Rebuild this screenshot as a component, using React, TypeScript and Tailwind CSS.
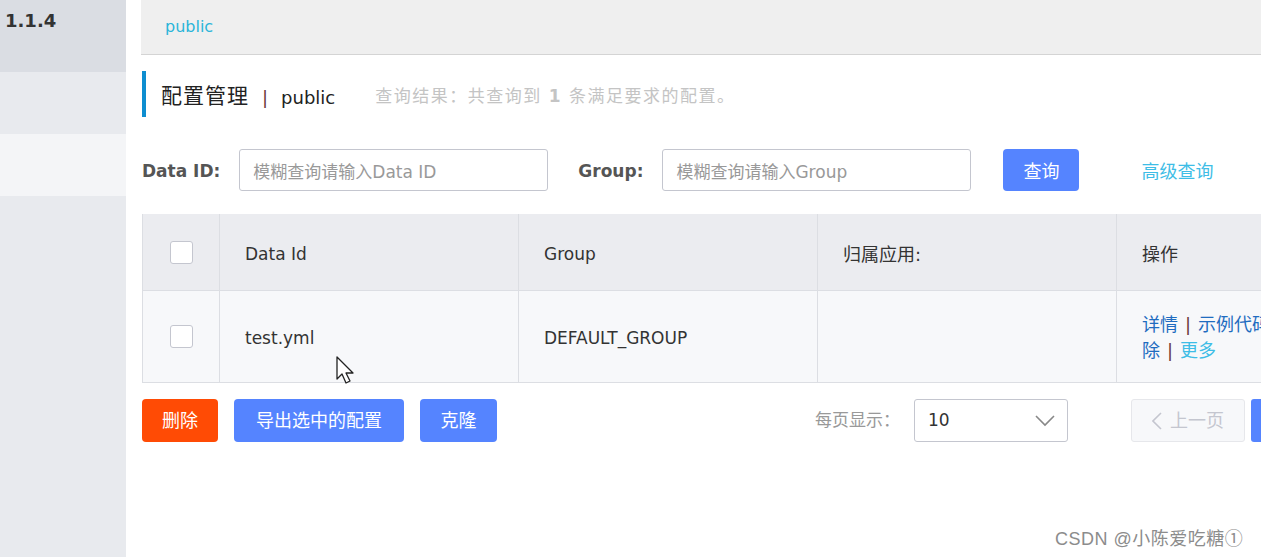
const font = { fontFamily: '"DejaVu Sans", "Noto Sans CJK SC", sans-serif' }

function Checkbox() {
  return <span className="block w-[23px] h-[23px] rounded-[3px] border border-[#c4c6cf] bg-white" />
}

export default function App() {
  return (
    <div className="relative flex h-[557px] w-[1261px] overflow-hidden bg-white text-[#333]" style={font}>
      {/* sidebar */}
      <div className="w-[126px] shrink-0 flex flex-col">
        <div className="h-[72px] bg-[#dadde3] pl-[5px] pt-[7px] text-[18px] font-bold text-[#333]">1.1.4</div>
        <div className="h-[62px] bg-[#e8eaee]" />
        <div className="h-[62px] bg-[#f4f5f7]" />
        <div className="flex-1 bg-[#e8eaee]" />
      </div>

      {/* main */}
      <div className="flex-1 min-w-0 pl-[15px] overflow-hidden">
        <div className="h-[55px] bg-[#efefef] border-b border-[#d4d4d4] flex items-center pl-[24px] text-[16px] text-[#2ab5d9]">
          public
        </div>

        <div className="ml-px mt-[16px] h-[46px] border-l-[4px] border-[#0e8ed0] flex items-center pl-[15px] pt-[6px] whitespace-nowrap">
          <span className="text-[21px] tracking-[1px] text-[#222]">配置管理</span>
          <span className="mx-[13px] text-[18px] text-[#6b3a3a]">|</span>
          <span className="text-[18px] text-[#222]">public</span>
          <span className="ml-[40px] text-[17px] tracking-[1.5px] text-[#c4c4c4]">
            查询结果：共查询到 <b className="font-bold">1</b> 条满足要求的配置。
          </span>
        </div>

        <div className="ml-px mt-[32px] h-[42px] flex items-center whitespace-nowrap">
          <span className="pt-[3px] text-[17px] font-bold text-[#555]">Data ID:</span>
          <input
            className="ml-[19px] w-[309px] h-[42px] shrink-0 rounded-[3px] border border-[#c4c6cf] px-[13px] pt-[3px] text-[17px] outline-none placeholder:text-[#999]"
            placeholder="模糊查询请输入Data ID"
          />
          <span className="ml-[30px] pt-[3px] text-[17px] font-bold text-[#555]">Group:</span>
          <input
            className="ml-[19px] w-[309px] h-[42px] shrink-0 rounded-[3px] border border-[#c4c6cf] px-[13px] pt-[3px] text-[17px] outline-none placeholder:text-[#999]"
            placeholder="模糊查询请输入Group"
          />
          <button className="ml-[32px] w-[76px] h-[42px] shrink-0 rounded-[4px] bg-[#5584ff] pt-[3px] text-white text-[18px]">查询</button>
          <a className="ml-[62px] pt-[3px] text-[18px] text-[#3ebde6]">高级查询</a>
        </div>

        {/* table */}
        <div className="ml-px mt-[23px] w-[1300px] border-l border-b border-[#dcdee3] text-[17px]">
          <div className="grid grid-cols-[77px_299px_299px_299px_326px] h-[77px] bg-[#ebecf0] border-b border-[#dcdee3]">
            <div className="flex items-center justify-center border-r border-[#dcdee3]"><Checkbox /></div>
            <div className="flex items-center pl-[25px] pt-[5px] border-r border-[#dcdee3]">Data Id</div>
            <div className="flex items-center pl-[25px] pt-[5px] border-r border-[#dcdee3]">Group</div>
            <div className="flex items-center pl-[25px] pt-[5px] border-r border-[#dcdee3] text-[18px]">归属应用:</div>
            <div className="flex items-center pl-[25px] pt-[5px] text-[18px]">操作</div>
          </div>
          <div className="grid grid-cols-[77px_299px_299px_299px_326px] h-[91px] bg-[#f7f8fa]">
            <div className="flex items-center justify-center border-r border-[#dcdee3]"><Checkbox /></div>
            <div className="flex items-center pl-[25px] pt-[4px] border-r border-[#dcdee3]">test.yml</div>
            <div className="flex items-center pl-[25px] pt-[4px] border-r border-[#dcdee3]">DEFAULT_GROUP</div>
            <div className="border-r border-[#dcdee3]" />
            <div className="flex flex-col justify-center pl-[25px] pt-[2px] text-[18px] leading-[26px] whitespace-nowrap">
              <div>
                <a className="text-[#1f6cc0]">详情</a>
                <span className="mx-[7px] text-[#6b3a3a]">|</span>
                <a className="text-[#1f6cc0]">示例代码</a>
                <span className="mx-[7px] text-[#6b3a3a]">|</span>
                <a className="text-[#1f6cc0]">编辑</a>
                <span className="mx-[7px] text-[#6b3a3a]">|</span>
                <a className="text-[#1f6cc0]">删</a>
              </div>
              <div>
                <a className="text-[#1f6cc0]">除</a>
                <span className="mx-[7px] text-[#6b3a3a]">|</span>
                <a className="text-[#3ebde6]">更多</a>
              </div>
            </div>
          </div>
        </div>

        {/* footer */}
        <div className="ml-px mt-[16px] h-[43px] flex items-center whitespace-nowrap">
          <button className="w-[76px] h-[43px] shrink-0 rounded-[4px] bg-[#ff4b05] text-white text-[18px]">删除</button>
          <button className="ml-[16px] w-[170px] h-[43px] shrink-0 rounded-[4px] bg-[#5584ff] text-white text-[18px]">导出选中的配置</button>
          <button className="ml-[16px] w-[77px] h-[43px] shrink-0 rounded-[4px] bg-[#5584ff] text-white text-[18px]">克隆</button>
          <span className="ml-[318px] text-[17px] text-[#999]">每页显示：</span>
          <div className="ml-[14px] w-[154px] h-[43px] shrink-0 rounded-[3px] border border-[#c4c6cf] flex items-center justify-between pl-[13px] pr-[12px] text-[17px] text-[#333]">
            <span>10</span>
            <svg width="20" height="12" viewBox="0 0 20 12" fill="none" stroke="#888" strokeWidth="1.6">
              <path d="M1 1l9 9 9-9" />
            </svg>
          </div>
          <div className="ml-[63px] w-[114px] h-[43px] shrink-0 rounded-[3px] border border-[#e6e7eb] bg-[#f7f8fa] flex items-center justify-center gap-[8px] text-[18px] text-[#c4c6cf]">
            <svg width="10" height="18" viewBox="0 0 10 18" fill="none" stroke="#c4c6cf" strokeWidth="1.6">
              <path d="M9 1L1 9l8 8" />
            </svg>
            <span>上一页</span>
          </div>
          <div className="ml-[6px] w-[60px] h-[43px] shrink-0 rounded-[3px] bg-[#5584ff]" />
        </div>
      </div>

      {/* mouse cursor */}
      <svg className="absolute left-[336px] top-[356px]" width="22" height="30" viewBox="0 0 22 30">
        <path d="M1 1v22l5-5 4 9 4-2-4-8h7z" fill="white" stroke="#222" strokeWidth="1.3" strokeLinejoin="round" />
      </svg>

      {/* watermark */}
      <div className="absolute left-[1055px] top-[526px] text-[18px] tracking-[0.5px] text-[#8c8c8c]" style={{ fontFamily: '"Liberation Sans", "Noto Sans CJK SC", sans-serif' }}>
        CSDN @小陈爱吃糖①
      </div>
    </div>
  )
}
